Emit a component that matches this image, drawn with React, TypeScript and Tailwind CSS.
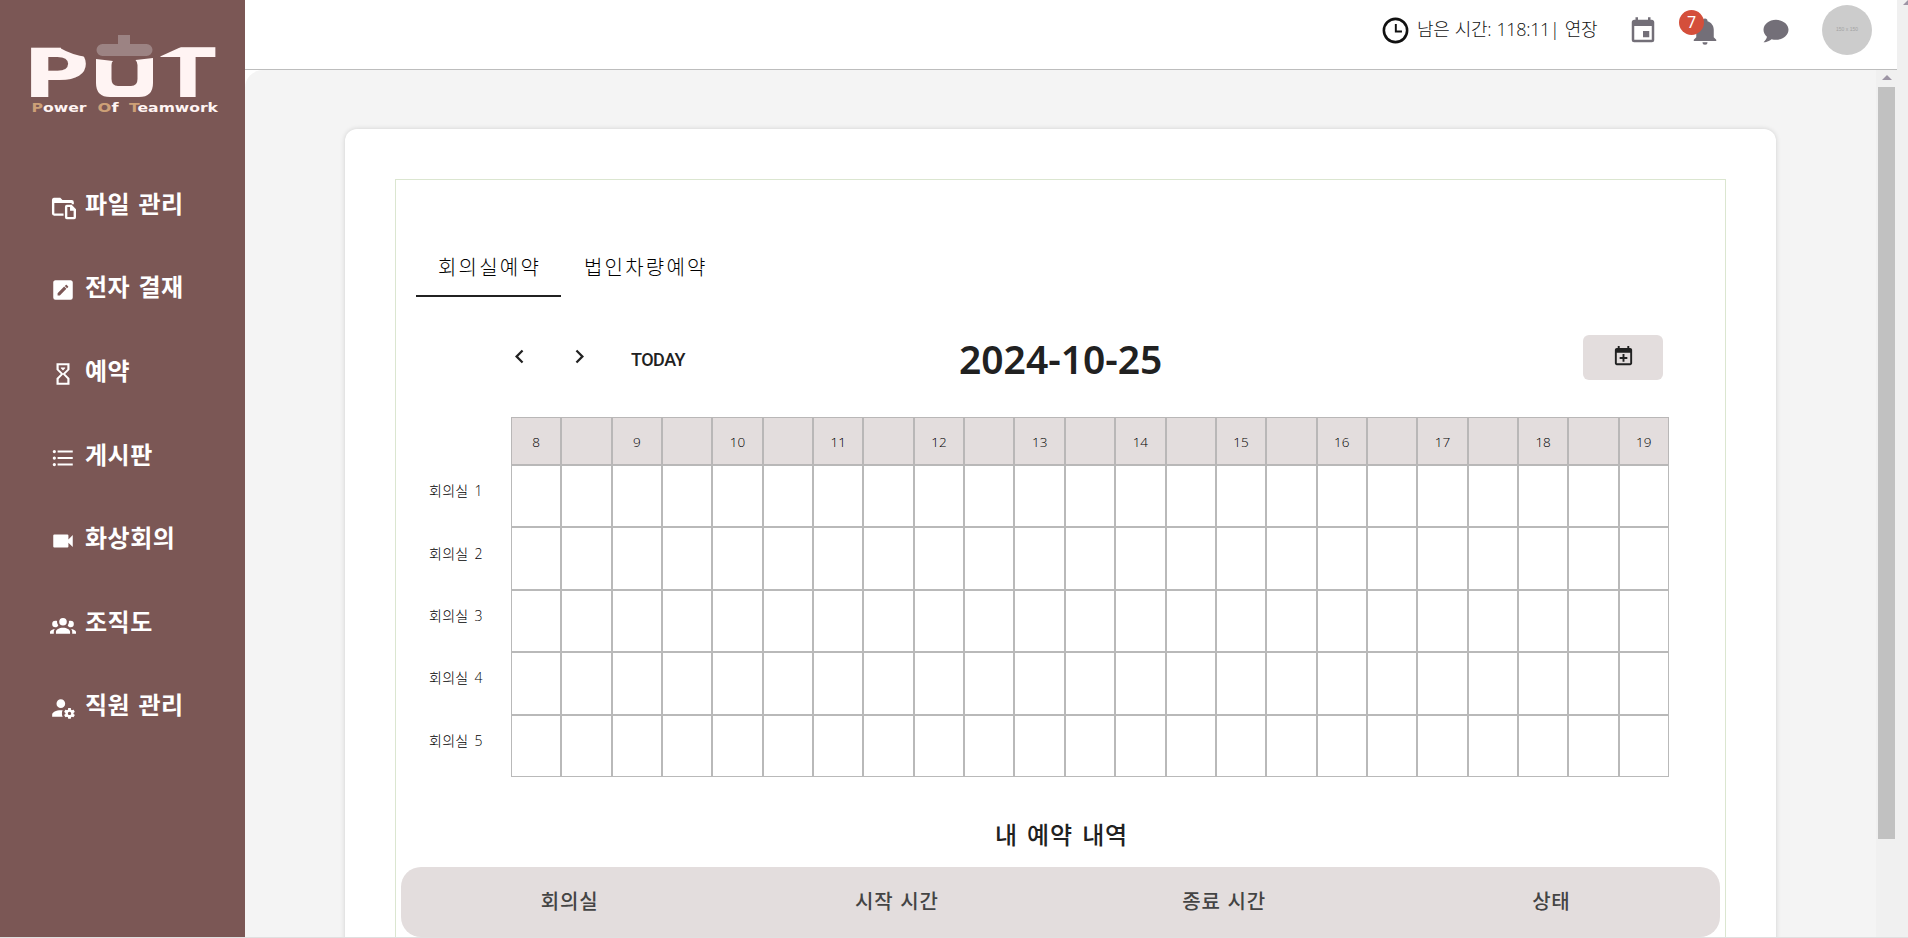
import React from "react";

const SANS = "font-['Noto_Sans','Noto_Sans_CJK_KR',sans-serif]";

function Icon({ d, className }: { d: string; className: string }) {
  return (
    <svg viewBox="0 0 24 24" className={className} fill="currentColor" aria-hidden="true">
      <path d={d} />
    </svg>
  );
}

const icons = {
  folderFile:
    "M3.500,3.500H9.500L11.500,5.500H20A2,2 0 0,1 22,7.500V9.500H20V8.200H4V18H12.500V20H3.800A2,2 0 0,1 1.800,18V5.500A2,2 0 0,1 3.500,3.500M15.500,10H20L24,14V21.500A1.700,1.700 0 0,1 22.300,23.200H15.500A1.700,1.700 0 0,1 13.800,21.500V11.700A1.700,1.700 0 0,1 15.500,10M16,12V21.200H21.800V15.500H18.500V12Z",
  pencilBox:
    "M19,3H5C3.89,3 3,3.9 3,5V19A2,2 0 0,0 5,21H19A2,2 0 0,0 21,19V5C21,3.89 20.1,3 19,3M16.7,9.35L15.7,10.35L13.65,8.3L14.65,7.3C14.86,7.08 15.21,7.08 15.42,7.3L16.7,8.58C16.92,8.79 16.92,9.14 16.7,9.35M7,14.94L13.06,8.88L15.12,10.94L9.06,17H7V14.94Z",
  timerSand:
    "M6,2V8L10,12L6,16V22H18V16L14,12L18,8V2H6M16,16.5V20H8V16.5L12,12.5L16,16.5M12,11.5L8,7.5V4H16V7.5L12,11.5M10,6H14V6.75L12,8.75L10,6.75Z",
  list: "M7,5H21V7H7V5M7,13V11H21V13H7M4,4.5A1.5,1.5 0 0,1 5.5,6A1.5,1.5 0 0,1 4,7.5A1.5,1.5 0 0,1 2.5,6A1.5,1.5 0 0,1 4,4.5M4,10.5A1.5,1.5 0 0,1 5.5,12A1.5,1.5 0 0,1 4,13.5A1.5,1.5 0 0,1 2.5,12A1.5,1.5 0 0,1 4,10.5M7,19V17H21V19H7M4,16.5A1.5,1.5 0 0,1 5.5,18A1.5,1.5 0 0,1 4,19.5A1.5,1.5 0 0,1 2.5,18A1.5,1.5 0 0,1 4,16.5Z",
  video:
    "M17,10.5V7A1,1 0 0,0 16,6H4A1,1 0 0,0 3,7V17A1,1 0 0,0 4,18H16A1,1 0 0,0 17,17V13.5L21,17.5V6.5L17,10.5Z",
  group:
    "M12,5.5A3.5,3.5 0 0,1 15.5,9A3.5,3.5 0 0,1 12,12.5A3.5,3.5 0 0,1 8.5,9A3.5,3.5 0 0,1 12,5.5M5,8C5.56,8 6.08,8.15 6.53,8.42C6.38,9.85 6.8,11.27 7.66,12.38C7.16,13.34 6.16,14 5,14A3,3 0 0,1 2,11A3,3 0 0,1 5,8M19,8A3,3 0 0,1 22,11A3,3 0 0,1 19,14C17.84,14 16.84,13.34 16.34,12.38C17.2,11.27 17.62,9.85 17.47,8.42C17.92,8.15 18.44,8 19,8M5.5,18.25C5.5,16.18 8.41,14.5 12,14.5C15.59,14.5 18.5,16.18 18.5,18.25V20H5.5V18.25M0,20V18.5C0,17.11 1.89,15.94 4.45,15.6C3.86,16.28 3.5,17.22 3.5,18.25V20H0M24,20H20.5V18.25C20.5,17.22 20.14,16.28 19.55,15.6C22.11,15.94 24,17.11 24,18.5V20Z",
  accountCog:
    "M10 4A4 4 0 0 0 6 8A4 4 0 0 0 10 12A4 4 0 0 0 14 8A4 4 0 0 0 10 4M17 12C16.87 12 16.76 12.09 16.74 12.21L16.55 13.53C16.25 13.66 15.96 13.82 15.7 14L14.46 13.5C14.35 13.5 14.22 13.5 14.15 13.63L13.15 15.36C13.09 15.47 13.11 15.6 13.21 15.68L14.27 16.5C14.25 16.67 14.24 16.83 14.24 17C14.24 17.17 14.25 17.33 14.27 17.5L13.21 18.32C13.12 18.4 13.09 18.53 13.15 18.64L14.15 20.37C14.21 20.5 14.34 20.5 14.46 20.5L15.7 20C15.96 20.18 16.24 20.35 16.55 20.47L16.74 21.79C16.76 21.91 16.86 22 17 22H19C19.11 22 19.22 21.91 19.24 21.79L19.43 20.47C19.73 20.34 20 20.18 20.27 20L21.5 20.5C21.63 20.5 21.76 20.5 21.83 20.37L22.83 18.64C22.89 18.53 22.86 18.4 22.77 18.32L21.7 17.5C21.72 17.33 21.74 17.17 21.74 17C21.74 16.83 21.73 16.67 21.7 16.5L22.76 15.68C22.85 15.6 22.88 15.47 22.82 15.36L21.82 13.63C21.76 13.5 21.63 13.5 21.5 13.5L20.27 14C20 13.82 19.73 13.65 19.42 13.53L19.23 12.21C19.22 12.09 19.11 12 19 12H17M10 14C5.58 14 2 15.79 2 18V20H11.68A7 7 0 0 1 11 17A7 7 0 0 1 11.64 14.09C11.11 14.03 10.56 14 10 14M18 15.5C18.83 15.5 19.5 16.17 19.5 17C19.5 17.83 18.83 18.5 18 18.5C17.16 18.5 16.5 17.83 16.5 17C16.5 16.17 17.17 15.5 18 15.5Z",
  clock:
    "M12,20A8,8 0 0,0 20,12A8,8 0 0,0 12,4A8,8 0 0,0 4,12A8,8 0 0,0 12,20M12,2A10,10 0 0,1 22,12A10,10 0 0,1 12,22A10,10 0 0,1 2,12A10,10 0 0,1 12,2M11.5,7H13V12H17V13.5H11.5V7Z",
  calendar:
    "M19,19H5V8H19M16,1V3H8V1H6V3H5C3.89,3 3,3.89 3,5V19A2,2 0 0,0 5,21H19A2,2 0 0,0 21,19V5C21,3.89 20.1,3 19,3H18V1M17,12H12V17H17V12Z",
  bell: "M21,19V20H3V19L5,17V11C5,7.9 7.03,5.17 10,4.29C10,4.19 10,4.1 10,4A2,2 0 0,1 12,2A2,2 0 0,1 14,4C14,4.1 14,4.19 14,4.29C16.97,5.17 19,7.9 19,11V17L21,19M14,21A2,2 0 0,1 12,23A2,2 0 0,1 10,21",
  chat: "M12,3C17.5,3 22,6.58 22,11C22,15.42 17.5,19 12,19C10.76,19 9.57,18.82 8.47,18.5C5.55,21 2,21 2,21C4.33,18.67 4.7,17.1 4.75,16.5C3.05,15.07 2,13.14 2,11C2,6.58 6.5,3 12,3Z",
  chevronLeft: "M15.41,16.58L10.83,12L15.41,7.41L14,6L8,12L14,18L15.41,16.58Z",
  chevronRight: "M8.59,16.58L13.17,12L8.59,7.41L10,6L16,12L10,18L8.59,16.58Z",
  calendarPlus:
    "M19 19V8H5V19H19M16 1H18V3H19C20.11 3 21 3.9 21 5V19C21 20.11 20.11 21 19 21H5C3.89 21 3 20.1 3 19V5C3 3.89 3.89 3 5 3H6V1H8V3H16V1M11 9.5H13V12.500H16V14.500H13V17.500H11V14.500H8V12.500H11V9.5Z",
};

const menu = [
  { label: "파일 관리", icon: icons.folderFile },
  { label: "전자 결재", icon: icons.pencilBox },
  { label: "예약", icon: icons.timerSand },
  { label: "게시판", icon: icons.list },
  { label: "화상회의", icon: icons.video },
  { label: "조직도", icon: icons.group },
  { label: "직원 관리", icon: icons.accountCog },
];

const slots = Array.from({ length: 23 }, (_, i) => (i % 2 === 0 ? String(8 + i / 2) : ""));
const rooms = ["회의실 1", "회의실 2", "회의실 3", "회의실 4", "회의실 5"];

function Logo() {
  return (
    <svg viewBox="0 0 245 130" className="h-[130px] w-[245px] shrink-0">
      <g fill="#fff4f3" fontFamily="DejaVu Sans" fontWeight="700" fontSize="67">
        <text transform="translate(22.800 97) scale(1.360 1)">P</text>
        <text transform="translate(160 97) scale(1.220 1)">T</text>
      </g>
      <path d="M61 47 L87 47 L87 57 Q72 55 61 48.500 Z" fill="#7b5755" />
      <path d="M159 47 L181 47 L159 57 Z" fill="#7b5755" />
      <path
        d="M96 59 L113 61 Q111.500 62 111.500 65 V79 Q111.500 86 118 86 H131 Q137.500 86 137.500 79 V65 Q137.500 62 135.500 60 L153 58 V83 Q153 97 139 97 H110 Q96 97 96 83 Z"
        fill="#fff4f3"
      />
      <path
        d="M118 35 H130 V44 H146.500 A5.800 5.800 0 0 1 146.500 56 H102.500 A5.800 5.800 0 0 1 102.500 44 H118 Z"
        fill="#9c8383"
      />
      <g fontFamily="DejaVu Sans" fontWeight="700" fontSize="13" fill="#fff4f3">
        <text x="31.500" y="111.500" textLength="55" lengthAdjust="spacingAndGlyphs">
          <tspan fill="#cda077">P</tspan>ower
        </text>
        <text x="97.500" y="111.500" textLength="21" lengthAdjust="spacingAndGlyphs">
          <tspan fill="#cda077">O</tspan>f
        </text>
        <text x="129" y="111.500" textLength="89" lengthAdjust="spacingAndGlyphs">
          <tspan fill="#cda077">T</tspan>eamwork
        </text>
      </g>
    </svg>
  );
}

function Sidebar() {
  return (
    <aside className="flex w-[245px] shrink-0 flex-col bg-[#7b5755] text-white">
      <Logo />
      <nav className="flex flex-col pt-8">
        {menu.map((item) => (
          <a key={item.label} className="flex h-[83.600px] items-center gap-[9px] pl-[50px]">
            <Icon d={item.icon} className="mt-[6px] size-[26px]" />
            <span className="text-[24px] font-bold leading-[30px] tracking-[0.5px] [word-spacing:1.500px]">
              {item.label}
            </span>
          </a>
        ))}
      </nav>
    </aside>
  );
}

function TopBar() {
  return (
    <header className="flex h-[70px] items-start border-b border-[#bdbdbd] bg-white pl-[1135px] text-[#736f78]">
      <div className="mt-[15px] flex h-[31px] w-[248px] shrink-0 items-center gap-[6px] text-[#111]">
        <Icon d={icons.clock} className="size-[31px] shrink-0" />
        <span className="-mt-[4px] whitespace-nowrap font-['Open_Sans','Noto_Sans_CJK_KR',sans-serif] text-[18px] font-light leading-[24px] tracking-[-0.35px] [word-spacing:1px]">
          남은 시간: 118:11| 연장
        </span>
      </div>
      <Icon d={icons.calendar} className="mt-[15.500px] size-[30px] shrink-0" />
      <div className="relative ml-[32px] mt-[15.500px] size-[30px] shrink-0">
        <Icon d={icons.bell} className="size-[30px]" />
        <span className="absolute -left-[11px] -top-[5.500px] flex size-[25px] items-center justify-center rounded-full bg-[#d44f3b] pb-px text-[16px] text-white">
          7
        </span>
      </div>
      <Icon d={icons.chat} className="ml-[41px] mt-[15.500px] size-[30px] shrink-0" />
      <div className="ml-[31px] mt-[5px] flex size-[50px] shrink-0 items-center justify-center rounded-full bg-[#cccccc] font-[Liberation_Sans,sans-serif] text-[5px] text-[#a3a3a3]">
        150 x 150
      </div>
    </header>
  );
}

function Schedule() {
  return (
    <div className="mt-[37px] flex pl-[20px] font-['Open_Sans','Noto_Sans_CJK_KR',sans-serif]">
      <div className="w-[95px] shrink-0 pt-[48px]">
        {rooms.map((room) => (
          <div key={room} className="flex h-[62.400px] items-center pb-[11px] pl-[13px] text-[14px] text-black">
            <span className="font-light tracking-[0.3px] [word-spacing:2px]">{room}</span>
          </div>
        ))}
      </div>
      <div className="w-[1158px] shrink-0">
        <div className="grid h-[48px] grid-cols-[repeat(23,minmax(0,1fr))]">
          {slots.map((slot, i) => (
            <div
              key={i}
              className="flex items-center justify-center border border-[#b9b7b7] bg-[#e3dddd] pt-[2px] text-[13.500px] font-light text-black"
            >
              {slot}
            </div>
          ))}
        </div>
        {rooms.map((room) => (
          <div key={room} className="grid h-[62.400px] grid-cols-[repeat(23,minmax(0,1fr))]">
            {slots.map((_, i) => (
              <div key={i} className="border border-[#b9b9b9]" />
            ))}
          </div>
        ))}
      </div>
    </div>
  );
}

function Reservation() {
  return (
    <section className="mx-[50px] mt-[50px] h-[900px] border border-[#dbe6d0]">
      <div className="ml-[20px] mt-[57px] flex h-[60px] text-[20px] font-light tracking-[2.200px] text-black">
        <div className="flex w-[145px] items-center border-b-2 border-[#212121] pl-[22px] pt-[4px]">회의실예약</div>
        <div className="flex items-center pl-[23px] pt-[2px]">법인차량예약</div>
      </div>
      <div className="mt-[38px] flex h-[45px] items-center text-[#212121]">
        <Icon d={icons.chevronLeft} className="-mt-[2px] ml-[110px] size-[27px] shrink-0" />
        <Icon d={icons.chevronRight} className="-mt-[2px] ml-[33px] size-[27px] shrink-0" />
        <span className="ml-[38px] w-[250px] shrink-0 pt-[3px] font-[Roboto,sans-serif] text-[18px] font-medium tracking-[-0.500px]">
          TODAY
        </span>
        <h1 className="ml-[78px] w-[204px] shrink-0 whitespace-nowrap pt-[1px] text-[39px] font-semibold leading-[45px]">
          2024-10-25
        </h1>
        <button className="ml-auto mr-[62px] flex h-[45px] w-[80px] items-center justify-center rounded-md bg-[#e3dddd] pb-[2px]">
          <Icon d={icons.calendarPlus} className="size-[23px]" />
        </button>
      </div>
      <Schedule />
      <h2 className="mt-[40px] pl-[2px] text-center text-[24px] font-medium leading-[36px] tracking-[0.9px] text-[#212121] [word-spacing:2px]">
        내 예약 내역
      </h2>
      <div className="mx-[5px] mt-[14px] grid h-[70px] grid-cols-4 items-center rounded-[20px] bg-[#e3dddd] pl-[5px] pr-[5px] pt-[1px] text-center text-[20px] font-medium tracking-[0.8px] text-[#444] [word-spacing:1px]">
        <span>회의실</span>
        <span>시작 시간</span>
        <span>종료 시간</span>
        <span>상태</span>
      </div>
    </section>
  );
}

export default function App() {
  return (
    <div className={`flex h-[938px] w-[1908px] flex-col overflow-hidden bg-[#e0e0e0] ${SANS}`}>
      <div className="flex h-[937px] shrink-0 bg-[#f0f0f0]">
        <Sidebar />
        <div className="flex w-[1652px] shrink-0 flex-col bg-white">
          <TopBar />
          <div className="flex h-[867px]">
            <main className="h-full w-[1631px] shrink-0 overflow-hidden rounded-tl-[18px] bg-[#f4f4f4] pl-[100px]">
              <div className="mt-[59px] h-[1000px] w-[1431px] overflow-hidden rounded-[12px] bg-white shadow-[0_0_5px_rgba(0,0,0,0.15)]">
                <Reservation />
              </div>
            </main>
            <div className="flex w-[21px] flex-col items-center bg-[#f0f0f0] pt-[5px]">
              <svg viewBox="0 0 10 5" className="h-[5px] w-[10px]">
                <path d="M0 5 L5 0 L10 5 Z" fill="#9d95a5" />
              </svg>
              <div className="mt-[7px] h-[752px] w-[17px] bg-[#c1c1c1]" />
            </div>
          </div>
        </div>
        <div className="flex w-[11px] justify-end">
          <svg viewBox="0 0 5 5" className="size-[5px]">
            <path d="M0 5 L5 0 V5 Z" fill="#9d95a5" />
          </svg>
        </div>
      </div>
    </div>
  );
}
